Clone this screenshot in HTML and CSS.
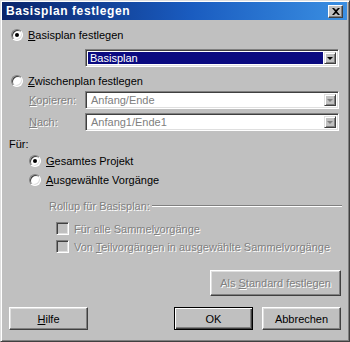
FILE: index.html
```html
<!DOCTYPE html>
<html>
<head>
	<title>Basisplan festlegen</title>
	<link rel="stylesheet" href="styles.css">
</head>
<body>
	<div class="dlg">
		<div class="title">
			<span>Basisplan festlegen</span>
			<div class="close">
				<svg width="8" height="7" viewBox="0 0 8 7"><path d="M0 0h2l2 2 2-2h2L5 3.5 8 7H6L4 5 2 7H0l3-3.5z" fill="#000"/></svg>
			</div>
		</div>
		<div class="body">
			<div class="row r1">
				<span class="radio on"></span><span class="lbl"><u>B</u>asisplan festlegen</span>
			</div>
			<div class="combo sel">
				<div class="val"><span>Basisplan</span></div>
				<div class="arr"><i></i></div>
			</div>
			<div class="row r2">
				<span class="radio"></span><span class="lbl"><u>Z</u>wischenplan festlegen</span>
			</div>
			<div class="frow f1">
				<span class="flbl dis"><u>K</u>opieren:</span>
				<div class="combo off">
					<div class="val"><span>Anfang/Ende</span></div>
					<div class="arr"><i></i></div>
				</div>
			</div>
			<div class="frow f2">
				<span class="flbl dis"><u>N</u>ach:</span>
				<div class="combo off">
					<div class="val"><span>Anfang1/Ende1</span></div>
					<div class="arr"><i></i></div>
				</div>
			</div>
			<div class="fuer">Für:</div>
			<div class="row r3">
				<span class="radio on"></span><span class="lbl"><u>G</u>esamtes Projekt</span>
			</div>
			<div class="row r4">
				<span class="radio"></span><span class="lbl"><u>A</u>usgewählte Vorgänge</span>
			</div>
			<div class="group">
				<span class="dis">Rollup für Basisplan:</span><div class="etch"></div>
			</div>
			<div class="row c1">
				<span class="check"></span><span class="lbl dis">Für alle Sammel<u>v</u>orgänge</span>
			</div>
			<div class="row c2">
				<span class="check"></span><span class="lbl dis">Von <u>T</u>eilvorgängen in ausgewählte Sammelvorgänge</span>
			</div>
			<div class="std">
				<div class="btn wide"><span class="dis">Als <u>S</u>tandard festlegen</span></div>
			</div>
			<div class="bottom">
				<div class="btn"><span><u>H</u>ilfe</span></div>
				<div class="right">
					<div class="btn def"><span>OK</span></div>
					<div class="btn"><span>Abbrechen</span></div>
				</div>
			</div>
		</div>
	</div>
</body>
</html>
```

FILE: styles.css
```css
body {
	margin: 0;
	background: #c0c0c0;
}

.dlg {
	width: 350px;
	height: 342px;
	box-sizing: border-box;
	background: #c0c0c0;
	border-top: 1px solid #dfdfdf;
	border-left: 1px solid #dfdfdf;
	border-right: 1px solid #404040;
	border-bottom: 1px solid #404040;
	box-shadow: inset 1px 1px 0 #fff, inset -1px -1px 0 #808080;
	font-family: "Liberation Sans", Arial, sans-serif;
	font-size: 11px;
	color: #000;
	padding: 1px 2px 0 1px;
}

.title {
	height: 18px;
	display: flex;
	align-items: center;
	justify-content: space-between;
	background: linear-gradient(to right, #0a246a, #1a5cc0 55%, #3a8fe2);
	color: #fff;
	font-weight: bold;
	font-size: 12px;
	letter-spacing: 0.6px;
	padding: 0 4px 0 4px;
}

.close {
	width: 15px;
	height: 13px;
	background: #c0c0c0;
	box-sizing: border-box;
	border-top: 1px solid #fff;
	border-left: 1px solid #fff;
	border-right: 1px solid #404040;
	border-bottom: 1px solid #404040;
	box-shadow: inset -1px -1px 0 #808080;
	display: flex;
	align-items: center;
	justify-content: center;
	margin-top: 1px;
}

.row {
	display: flex;
	align-items: center;
	height: 12px;
}

.lbl {
	line-height: 12px;
}

u {
	text-decoration: underline;
	text-underline-offset: 1px;
}

.dis {
	color: #808080;
	text-shadow: 1px 1px 0 #fff;
}

.radio {
	width: 12px;
	height: 12px;
	border-radius: 50%;
	box-sizing: border-box;
	background: #fff;
	border: 1px solid;
	border-color: #808080 #fff #fff #808080;
	box-shadow: inset 1px 1px 0 #404040, inset -1px -1px 0 #dfdfdf;
	position: relative;
	margin-right: 5px;
}

.radio.on::after {
	content: "";
	position: absolute;
	left: 3px;
	top: 3px;
	width: 4px;
	height: 4px;
	border-radius: 50%;
	background: #000;
}

.r1 {
	margin-top: 9px;
	padding-left: 9px;
}

.combo {
	height: 18px;
	box-sizing: border-box;
	display: flex;
	background: #fff;
	border-top: 1px solid #808080;
	border-left: 1px solid #808080;
	border-right: 1px solid #fff;
	border-bottom: 1px solid #fff;
	box-shadow: inset 1px 1px 0 #404040, inset -1px -1px 0 #dfdfdf;
	padding: 2px;
}

.combo .val {
	flex: 1;
	display: flex;
	align-items: center;
	padding-left: 2px;
}

.combo.sel {
	margin: 8px 0 0 83px;
	width: 254px;
}

.combo.sel .val {
	background: #0a0a80;
	color: #fff;
	margin-right: 1px;
}

.combo.off .val {
	color: #808080;
	padding-left: 3px;
}

.arr {
	width: 12px;
	box-sizing: border-box;
	background: #c0c0c0;
	border-top: 1px solid #dfdfdf;
	border-left: 1px solid #dfdfdf;
	border-right: 1px solid #404040;
	border-bottom: 1px solid #404040;
	box-shadow: inset 1px 1px 0 #fff, inset -1px -1px 0 #808080;
	display: flex;
	align-items: center;
	justify-content: center;
}

.arr i {
	width: 0;
	height: 0;
	border-left: 3px solid transparent;
	border-right: 3px solid transparent;
	border-top: 3px solid #000;
}

.combo.off .arr i {
	border-top-color: #808080;
}

.r2 {
	margin-top: 8px;
	padding-left: 9px;
}

.frow {
	display: flex;
	align-items: center;
	margin-top: 4px;
}

.flbl {
	width: 56px;
	padding-left: 27px;
}

.frow .combo {
	width: 254px;
}

.fuer {
	margin: 7px 0 0 7px;
	line-height: 12px;
}

.r3 {
	margin-top: 5px;
	padding-left: 27px;
}

.r4 {
	margin-top: 7px;
	padding-left: 27px;
}

.group {
	display: flex;
	align-items: center;
	margin: 14px 0 0 47px;
	line-height: 12px;
}

.etch {
	flex: 1;
	height: 0;
	border-top: 1px solid #808080;
	border-bottom: 1px solid #fff;
	margin: 0 5px 0 2px;
}

.check {
	width: 13px;
	height: 13px;
	box-sizing: border-box;
	background: #c0c0c0;
	border-top: 1px solid #808080;
	border-left: 1px solid #808080;
	border-right: 1px solid #fff;
	border-bottom: 1px solid #fff;
	box-shadow: inset 1px 1px 0 #404040, inset -1px -1px 0 #dfdfdf;
	margin-right: 5px;
}

.c1 {
	height: 13px;
	margin-top: 10px;
	padding-left: 54px;
}

.c2 {
	height: 13px;
	margin-top: 5px;
	padding-left: 54px;
}

.btn {
	width: 79px;
	height: 23px;
	box-sizing: border-box;
	background: #c0c0c0;
	border-top: 1px solid #fff;
	border-left: 1px solid #fff;
	border-right: 1px solid #404040;
	border-bottom: 1px solid #404040;
	box-shadow: inset -1px -1px 0 #808080, inset 1px 1px 0 #dfdfdf;
	display: flex;
	align-items: center;
	justify-content: center;
}

.btn.def {
	border: 1px solid #000;
	box-shadow: inset 1px 1px 0 #fff, inset -1px -1px 0 #404040, inset -2px -2px 0 #808080;
}

.std {
	display: flex;
	justify-content: flex-end;
	margin: 17px 6px 0 0;
}

.btn.wide {
	width: 131px;
	height: 26px;
}

.bottom {
	display: flex;
	justify-content: space-between;
	margin: 11px 6px 0 7px;
}

.right {
	display: flex;
	gap: 9px;
}
```
